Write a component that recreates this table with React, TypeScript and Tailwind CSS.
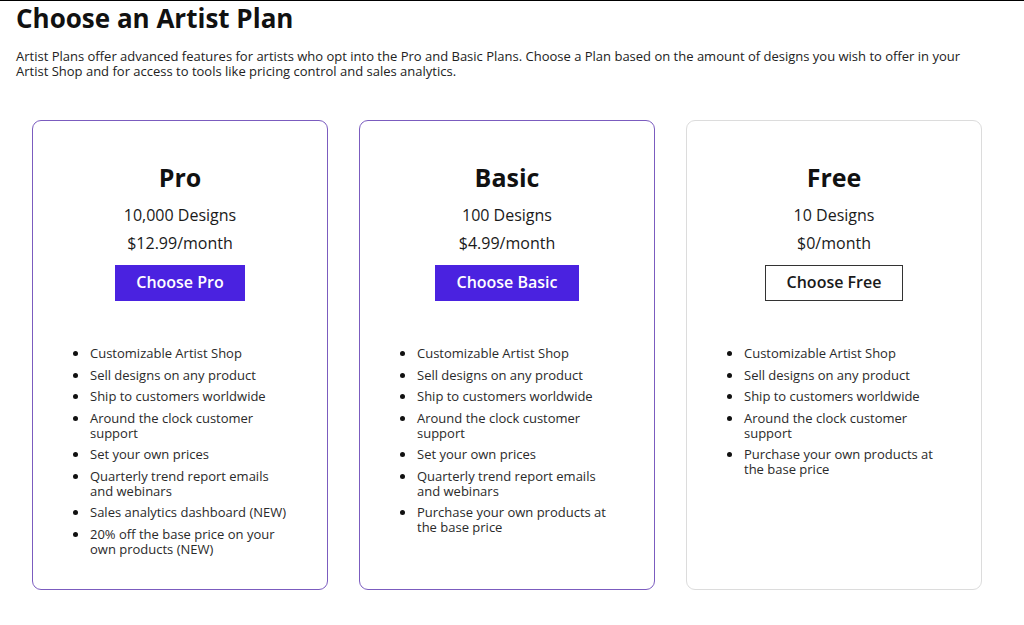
import React from 'react';

type Plan = {
  name: string;
  designs: string;
  price: string;
  cta: string;
  featured: boolean;
  features: string[];
};

const base = [
  'Customizable Artist Shop',
  'Sell designs on any product',
  'Ship to customers worldwide',
  'Around the clock customer support',
];

const plans: Plan[] = [
  {
    name: 'Pro',
    designs: '10,000 Designs',
    price: '$12.99/month',
    cta: 'Choose Pro',
    featured: true,
    features: [
      ...base,
      'Set your own prices',
      'Quarterly trend report emails and webinars',
      'Sales analytics dashboard (NEW)',
      '20% off the base price on your own products (NEW)',
    ],
  },
  {
    name: 'Basic',
    designs: '100 Designs',
    price: '$4.99/month',
    cta: 'Choose Basic',
    featured: true,
    features: [
      ...base,
      'Set your own prices',
      'Quarterly trend report emails and webinars',
      'Purchase your own products at the base price',
    ],
  },
  {
    name: 'Free',
    designs: '10 Designs',
    price: '$0/month',
    cta: 'Choose Free',
    featured: false,
    features: [...base, 'Purchase your own products at the base price'],
  },
];

const PlanCard: React.FC<{ plan: Plan }> = ({ plan }) => (
  <div
    className={`w-[296px] h-[470px] rounded-[9px] border bg-white pt-[42px] px-[24px] flex flex-col items-center ${
      plan.featured ? 'border-[#7b5cbf]' : 'border-[#dcdcdc]'
    }`}
  >
    <h2 className="text-[25px] leading-[28px] font-bold text-[#111]">{plan.name}</h2>
    <p className="mt-[14px] text-[16px] leading-[20px] text-[#1a1a1a]">{plan.designs}</p>
    <p className="mt-[8px] text-[16px] leading-[20px] text-[#1a1a1a]">{plan.price}</p>
    <button
      className={
        plan.featured
          ? 'mt-[12px] h-[36px] px-[21px] pb-[3px] bg-[#4a22e0] text-white text-[16px] font-semibold'
          : 'mt-[12px] h-[36px] px-[21px] pb-[3px] bg-white border border-[#333] text-[#1a1a1a] text-[16px] font-semibold'
      }
    >
      {plan.cta}
    </button>
    <ul className="mt-[45px] w-full list-disc pl-[32px] pr-[10px] text-[13px] leading-[15px] text-[#2a2a2a] flex flex-col gap-[6.5px] marker:text-[#111]">
      {plan.features.map((f) => (
        <li key={f} className="pl-[1px]">
          {f}
        </li>
      ))}
    </ul>
  </div>
);

const App: React.FC = () => {
  return (
    <div
      className="min-h-[625px] w-[1024px] bg-white border-t border-black"
      style={{ fontFamily: '"Open Sans", Lato, sans-serif' }}
    >
      <div className="px-[16px] pt-[1px]">
        <h1 className="text-[26px] leading-[32px] font-bold text-[#111]">Choose an Artist Plan</h1>
        <p className="mt-[15px] text-[13px] leading-[15px] text-[#222] max-w-[965px]">
          Artist Plans offer advanced features for artists who opt into the Pro and Basic Plans. Choose a Plan based on
          the amount of designs you wish to offer in your Artist Shop and for access to tools like pricing control and
          sales analytics.
        </p>
      </div>
      <div className="mt-[41px] pl-[32px] flex gap-[31px]">
        {plans.map((p) => (
          <PlanCard key={p.name} plan={p} />
        ))}
      </div>
    </div>
  );
};

export default App;
